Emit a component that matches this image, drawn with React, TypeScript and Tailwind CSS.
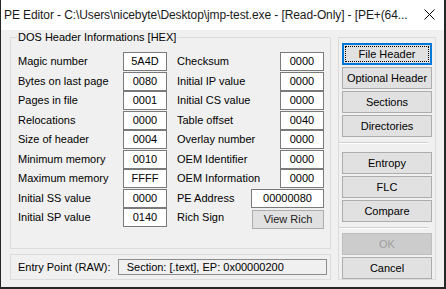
import React from "react";

const leftRows: [string, string][] = [
  ["Magic number", "5A4D"],
  ["Bytes on last page", "0080"],
  ["Pages in file", "0001"],
  ["Relocations", "0000"],
  ["Size of header", "0004"],
  ["Minimum memory", "0010"],
  ["Maximum memory", "FFFF"],
  ["Initial SS value", "0000"],
  ["Initial SP value", "0140"],
];

const rightRows: [string, string][] = [
  ["Checksum", "0000"],
  ["Initial IP value", "0000"],
  ["Initial CS value", "0000"],
  ["Table offset", "0040"],
  ["Overlay number", "0000"],
  ["OEM Identifier", "0000"],
  ["OEM Information", "0000"],
];

// rows alternate 20 / 19 px like the original dialog
const rowH = ["h-[20px]", "h-[19px]", "h-[20px]", "h-[19px]", "h-[20px]", "h-[19px]", "h-[20px]", "h-[19px]", "h-[19px]"];

const font = { fontFamily: '"Liberation Sans", Arial, sans-serif' };

const ValueBox = ({ value, wide }: { value: string; wide?: boolean }) => (
  <div
    className={`${wide ? "w-[73px]" : "w-[44px]"} h-[19px] bg-white border border-[#7a7a7a] flex items-center justify-center text-[11px] text-black`}
  >
    {value}
  </div>
);

const SideButton = ({ label, disabled }: { label: string; disabled?: boolean }) => (
  <button
    className={`h-[22px] w-full flex items-center justify-center text-[11px] border ${
      disabled ? "bg-[#cccccc] border-[#bfbfbf] text-[#a0a0a0]" : "bg-[#e1e1e1] border-[#adadad] text-black"
    }`}
  >
    {label}
  </button>
);

const Separator = () => <div className="h-[2px] mr-[4px] border-t border-[#d0d0d0] border-b border-b-white" />;

export default function App() {
  return (
    <div
      className="w-[446px] h-[289px] bg-[#f0f0f0] border-l border-r-2 border-b-2 border-[#262626] flex flex-col overflow-hidden"
      style={font}
    >
      {/* title bar */}
      <div className="h-[30px] bg-white flex items-center pl-[3px] pr-[9px] shrink-0">
        <span className="text-[12px] text-[#1a1a1a] whitespace-nowrap tracking-[-0.1px]">
          PE Editor - C:\Users\nicebyte\Desktop\jmp-test.exe - [Read-Only] - [PE+(64...
        </span>
        <svg width="11" height="11" viewBox="0 0 11 11" className="ml-auto mb-[2px] shrink-0">
          <path d="M0.5 0.5 L10.5 10.5 M10.5 0.5 L0.5 10.5" stroke="#000" strokeWidth="1" />
        </svg>
      </div>

      <div className="flex pt-[7px] pl-[9px]">
        {/* left side */}
        <div className="w-[321px] flex flex-col">
          <div className="relative h-[212px] border border-[#dcdcdc] pt-[14px] pl-[7px] pr-[6px] flex gap-[10px] text-[11px] text-black">
            <span className="absolute -top-[8px] left-[6px] bg-[#f0f0f0] px-[1px] leading-[14px]">
              DOS Header Informations [HEX]
            </span>
            <div className="w-[149px] flex flex-col">
              {leftRows.map(([label, value], i) => (
                <div key={label} className={`${rowH[i]} flex justify-between items-start`}>
                  <span className="leading-[19px]">{label}</span>
                  <ValueBox value={value} />
                </div>
              ))}
            </div>
            <div className="w-[147px] flex flex-col">
              {rightRows.map(([label, value], i) => (
                <div key={label} className={`${rowH[i]} flex justify-between items-start`}>
                  <span className="leading-[19px]">{label}</span>
                  <ValueBox value={value} />
                </div>
              ))}
              <div className={`${rowH[7]} flex justify-between items-start`}>
                <span className="leading-[19px]">PE Address</span>
                <ValueBox value="00000080" wide />
              </div>
              <div className={`${rowH[8]} flex justify-between items-start`}>
                <span className="leading-[19px]">Rich Sign</span>
                <button className="w-[72px] h-[19px] mt-[2px] bg-[#e1e1e1] border border-[#adadad] text-[11px] text-[#222] flex items-center justify-center">
                  View Rich
                </button>
              </div>
            </div>
          </div>

          <div className="mt-[5px] h-[26px] border border-[#dcdcdc] flex items-center pl-[7px] pr-[3px] text-[11px] text-black">
            <span className="w-[100px]">Entry Point (RAW):</span>
            <div className="w-[210px] h-[16px] bg-[#f0f0f0] border border-[#8c8c8c] flex items-center pl-[8px]">
              Section: [.text], EP: 0x00000200
            </div>
          </div>
        </div>

        {/* right side buttons */}
        <div className="ml-[7px] w-[98px] h-[243px] border border-[#dcdcdc] px-[3px] pt-[5px] flex flex-col">
          <div className="flex flex-col gap-[2px]">
            <button className="h-[22px] w-full bg-[#e1e1e1] border-2 border-[#0078d7] flex p-[1px] text-[11px] text-black">
              <span className="flex-1 border border-dotted border-black flex items-center justify-center">File Header</span>
            </button>
            <SideButton label="Optional Header" />
            <SideButton label="Sections" />
            <SideButton label="Directories" />
          </div>
          <div className="mt-[5px] mb-[8px] -ml-[3px]">
            <Separator />
          </div>
          <div className="flex flex-col gap-[2px]">
            <SideButton label="Entropy" />
            <SideButton label="FLC" />
            <SideButton label="Compare" />
          </div>
          <div className="mt-[5px] mb-[4px] -ml-[3px]">
            <Separator />
          </div>
          <div className="flex flex-col gap-[2px]">
            <SideButton label="OK" disabled />
            <SideButton label="Cancel" />
          </div>
        </div>
      </div>
    </div>
  );
}
